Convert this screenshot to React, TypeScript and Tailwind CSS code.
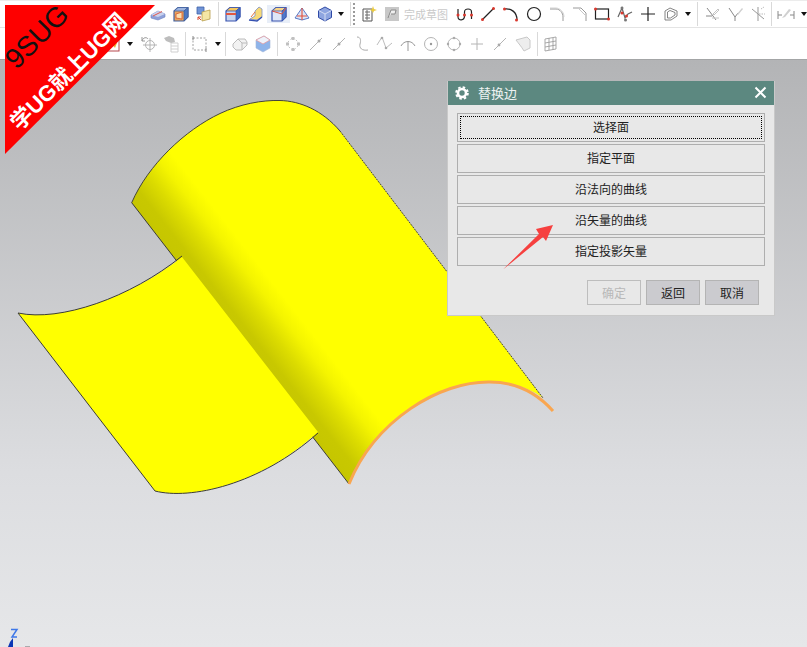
import React from 'react';

const Ico = ({ children }: { children: React.ReactNode }) => (
  <svg width="18" height="18" viewBox="0 0 18 18" fill="none">
    {children}
  </svg>
);

const Tool = ({ children, className = '' }: { children: React.ReactNode; className?: string }) => (
  <div className={`flex w-[23px] shrink-0 items-center justify-center ${className}`}>
    <Ico>{children}</Ico>
  </div>
);

const Sep = ({ className = '' }: { className?: string }) => (
  <div className={`h-[24px] w-px shrink-0 bg-[#d9d9d9] ${className}`} />
);

const Arrow = ({ className = '' }: { className?: string }) => (
  <div className={`flex w-[10px] shrink-0 justify-center ${className}`}>
    <div className="h-0 w-0 border-x-[3.5px] border-t-[4px] border-x-transparent border-t-[#111]" />
  </div>
);

const Box = ({ top, side, front, line = '#3a55b0' }: { top: string; side: string; front: string; line?: string }) => (
  <>
    <path d="M2 6 L6 2.5 H16 V12 L12 16 H2 Z" fill={front} stroke={line} strokeWidth="1.2" />
    <path d="M2 6 L6 2.5 H16 L12 6 Z" fill={top} stroke={line} strokeWidth="0.8" />
    <path d="M12 6 L16 2.5 V12 L12 16 Z" fill={side} stroke={line} strokeWidth="0.8" />
  </>
);

const Dot = ({ x, y, c = '#d9382e' }: { x: number; y: number; c?: string }) => <circle cx={x} cy={y} r="1.5" fill={c} />;

const Toolbar = () => (
  <div className="h-[60px] shrink-0 border-b border-[#a3a5a6] bg-white">
    <div className="flex h-[28px] items-center overflow-hidden border-y border-t-[#ececec] border-b-[#e4e4e4] pl-[146px]">
      <Tool>
        <path d="M2 10 L9 6 L16 9 V12 L9 15 L2 13 Z" fill="#8ea0d8" stroke="#6b7fc0" strokeWidth="0.6" />
        <path d="M2 10 L9 6 L16 9 L9 12 Z" fill="#c9d2ee" />
        <path d="M4 11 L13 6.5" stroke="#e0564b" strokeWidth="1" />
      </Tool>
      <Tool>
        <Box top="#9db4de" side="#4d78c2" front="#e9a45c" line="#41619f" />
        <path d="M4 9 L10 7 V14 L4 13 Z" fill="#fbe0b0" stroke="#d6562f" strokeWidth="0.8" />
      </Tool>
      <Tool>
        <path d="M2 2 H9 V9 H2 Z" fill="#6f93d6" stroke="#3f62a8" strokeWidth="0.8" />
        <path d="M7 7 L15 5 V14 L7 16 Z" fill="#f5e6a5" stroke="#b89d4a" strokeWidth="0.8" />
        <path d="M3 12 L6 15 M3 15 V12 H6" stroke="#d9482e" strokeWidth="1" />
      </Tool>
      <Sep className="ml-[3px]" />
      <Tool className="ml-[2px]">
        <Box top="#f4c65e" side="#3f6cc4" front="#c9d6ef" />
        <path d="M2 9 H12" stroke="#e2573f" strokeWidth="2" />
      </Tool>
      <Tool>
        <path d="M3 14 L8 11 V6 L12 2 L15 4 V12 L10 15 Z" fill="#f6d977" stroke="#7c8fc4" strokeWidth="0.8" />
        <path d="M2 15 L10 16 L15 12" stroke="#3450b0" strokeWidth="1.3" />
        <path d="M8 7 L4 12" stroke="#e2733f" strokeWidth="1" />
      </Tool>
      <Tool className="bg-[#e8eef8]">
        <Box top="#f7d488" side="#4f78c9" front="#dfe7f6" />
        <path d="M2 6 L12 9 L16 3" stroke="#e2573f" strokeWidth="1" />
      </Tool>
      <Tool>
        <path d="M9 3 L16 13 L9 15 L2 13 Z" fill="#dbe4f6" stroke="#4b6cc0" strokeWidth="0.9" />
        <path d="M9 3 V15 M4 11 H14" stroke="#e2503a" strokeWidth="1.1" />
      </Tool>
      <Tool>
        <path d="M9 2 L15.5 5.5 V12.5 L9 16 L2.5 12.5 V5.5 Z" fill="#8ea5e0" stroke="#2f4aa6" strokeWidth="1" />
        <path d="M2.5 5.5 L9 9 L15.5 5.5 M9 9 V16" stroke="#d4ddf4" strokeWidth="1" />
      </Tool>
      <Arrow />
      <Sep className="ml-[4px]" />
      <div className="ml-[2px] h-[22px] w-[4px] shrink-0 border-l-2 border-dotted border-[#9a9a9a]" />
      <Tool>
        <path d="M3 4 H12 V16 H3 Z" fill="#fff" stroke="#555" strokeWidth="1" />
        <path d="M5 7 H10 M5 10 H10 M5 13 H10 M7 5 V15" stroke="#6a6a6a" strokeWidth="1" />
        <path d="M13 1 L14 4 L17 5 L14 6 L13 8 L12 6 L10 5 L12 4 Z" fill="#e9c93f" />
      </Tool>
      <Tool>
        <rect x="2" y="2" width="14" height="14" fill="#c8c8c8" />
        <path d="M5 13 L8 5 L13 5 L12 9 L8 9" fill="#efefef" stroke="#8a8a8a" strokeWidth="1" />
      </Tool>
      <span className="ml-px w-[44px] shrink-0 font-['Noto_Sans_CJK_SC',sans-serif] text-[11px] leading-none whitespace-nowrap text-[#c9c9c9]">完成草图</span>
      <Tool className="ml-[5px]">
        <path d="M2 4 V12 C2 16 8.5 16 8.5 11 V7 C8.5 3 15.5 3 15.5 7 V14" stroke="#222" strokeWidth="1.2" />
        <Dot x={2} y={10} />
        <Dot x={8.5} y={10} />
        <Dot x={15.5} y={10} />
      </Tool>
      <Tool>
        <path d="M3 15 L15 3" stroke="#222" strokeWidth="1.2" />
        <Dot x={3.5} y={14.5} />
        <Dot x={14.5} y={3.5} />
      </Tool>
      <Tool>
        <path d="M2 4 C9 3 15 7 15 15" stroke="#222" strokeWidth="1.3" />
        <Dot x={2.5} y={4} />
        <Dot x={14.5} y={15} />
      </Tool>
      <Tool>
        <circle cx="9" cy="9" r="6.5" stroke="#222" strokeWidth="1.2" />
      </Tool>
      <Tool>
        <path d="M2 4 H8 C12 4 15 8 15 12 V16" stroke="#9a9a9a" strokeWidth="1" />
        <path d="M2 3 H8 C11 3 16 6 16 12" stroke="#c8c8c8" strokeWidth="0.8" />
      </Tool>
      <Tool>
        <path d="M2 3 H10 L15 8 V16" stroke="#9a9a9a" strokeWidth="1" />
        <path d="M8 4 L14 10" stroke="#c8c8c8" strokeWidth="1" />
      </Tool>
      <Tool className="-ml-px">
        <rect x="2.5" y="4" width="13" height="10" stroke="#222" strokeWidth="1.2" />
        <Dot x={2.5} y={4} />
        <Dot x={15.5} y={14} />
      </Tool>
      <Tool>
        <path d="M2 12 L6 3 L9 13 L12 9 L16 7" stroke="#666" strokeWidth="1.2" />
        <Dot x={6} y={8} />
        <Dot x={10.5} y={11} />
        <Dot x={6} y={3} c="#777" />
        <Dot x={9.5} y={15} c="#777" />
      </Tool>
      <Tool>
        <path d="M2 9 H16 M9 2 V16" stroke="#222" strokeWidth="1.2" />
      </Tool>
      <Tool>
        <path d="M3 6 L8 3 L15 6 V11 L9 15 H3 Z M5.5 7 L8 5.5 L13 7.5 V10 L8.5 13 H5.5 Z" stroke="#777" strokeWidth="0.9" />
      </Tool>
      <Arrow className="ml-px" />
      <Sep className="ml-[4px]" />
      <Tool className="ml-[2px]">
        <path d="M4 3 L13 15 M3 11 H9" stroke="#888" strokeWidth="1" />
        <path d="M10 9 L15 4 L16 5 L11 10 Z M9 13 H16" stroke="#c4c4c4" strokeWidth="1" />
      </Tool>
      <Tool>
        <path d="M3 3 L9 12 V16 M9 12 L12 8" stroke="#888" strokeWidth="1" />
        <path d="M11 9 L16 3 L17 4 L12 10 Z" fill="#cfcfcf" />
      </Tool>
      <Tool>
        <path d="M3 4 L15 14 M9 2 V16" stroke="#999" strokeWidth="1" />
        <path d="M10 9 H16 M12 4 L15 2" stroke="#bbb" strokeWidth="1" strokeDasharray="1.5 1" />
      </Tool>
      <Sep className="ml-[2px]" />
      <Tool className="ml-[2px]">
        <path d="M1 6 V14 M17 6 V14 M1 10 H5 M13 10 H17" stroke="#888" strokeWidth="1" />
        <path d="M5 13 L12 4 L14 5 L8 12 Z" fill="#d0d0d0" />
      </Tool>
      <Arrow className="ml-[2px]" />
    </div>
    <div className="flex h-[31px] items-center overflow-hidden pl-[100px]">
      <Tool>
        <rect x="0" y="1" width="16" height="15" fill="#fff" stroke="#b5474c" strokeWidth="1" />
        <path d="M9 9 L14 8 L12 13 Z" fill="#e8b73a" />
      </Tool>
      <Arrow className="ml-[2px]" />
      <Tool className="ml-[2px]">
        <circle cx="10" cy="10" r="4.5" stroke="#b4b4b4" strokeWidth="1" />
        <path d="M10 3 V17 M3 10 H17" stroke="#b4b4b4" strokeWidth="1" />
        <path d="M2 6 C3 2 7 2 8 4 M2 2 V6 H5" stroke="#999" strokeWidth="1" />
      </Tool>
      <Tool>
        <path d="M8 8 H15 V17 H8 Z M8 11 H15 M8 14 H15" stroke="#cfcfcf" strokeWidth="1" />
        <path d="M1 3 L6 1 L11 3 L12 7 L8 8 L3 6 Z" fill="#bdbdbd" />
      </Tool>
      <Sep className="ml-[2px]" />
      <Tool className="ml-[2px]">
        <rect x="2" y="3" width="13" height="12" stroke="#a0a0a0" strokeWidth="1" strokeDasharray="2 1.5" />
        <path d="M2 1 V5 M15 13 V17" stroke="#888" strokeWidth="1" />
      </Tool>
      <Arrow className="ml-[2px]" />
      <Sep className="ml-[2px]" />
      <Tool className="ml-[2px]">
        <path d="M2 9 L7 4 H14 L16 7 V10 L11 15 H5 L2 12 Z M7 4 L11 8 V15 M11 8 H16" fill="#f2f2f2" stroke="#bcbcbc" strokeWidth="1" />
      </Tool>
      <Tool>
        <path d="M2 5 L10 1 L16 5 V13 L9 17 L2 13 Z" fill="#8eb4ea" stroke="#a3b6d6" strokeWidth="0.6" />
        <path d="M2 5 L9 9 L16 5 L10 1 Z" fill="#eef3fb" stroke="#e39aa0" strokeWidth="0.8" />
      </Tool>
      <Sep className="ml-[3px]" />
      <Tool className="ml-[3px]">
        <path d="M9 2 L16 9 L9 16 L2 9 Z" stroke="#c4c4c4" strokeWidth="1" strokeDasharray="2 2" />
        <rect x="2" y="7.5" width="3" height="3" fill="#c0c0c0" />
        <rect x="13" y="7.5" width="3" height="3" fill="#c0c0c0" />
        <rect x="7.5" y="2" width="3" height="3" fill="#c0c0c0" />
        <rect x="7.5" y="13" width="3" height="3" fill="#c0c0c0" />
      </Tool>
      <Tool>
        <path d="M3 15 L15 3" stroke="#b4b4b4" strokeWidth="1" />
        <circle cx="12" cy="6" r="1.5" fill="#a8a8a8" />
      </Tool>
      <Tool>
        <path d="M3 15 L15 3" stroke="#b4b4b4" strokeWidth="1" />
        <circle cx="9" cy="9" r="1.5" fill="#a8a8a8" />
      </Tool>
      <Tool>
        <path d="M4 2 C8 2 8 6 7 9 C6 13 9 16 15 15" stroke="#aaa" strokeWidth="1" />
      </Tool>
      <Tool>
        <path d="M1 10 L6 2 L10 13 L16 8" stroke="#bdbdbd" strokeWidth="1" />
        <circle cx="6" cy="3" r="1.3" fill="#aaa" />
        <circle cx="10" cy="13" r="1.3" fill="#aaa" />
      </Tool>
      <Tool>
        <path d="M2 11 C5 5 13 5 16 11 M9 6 V16" stroke="#999" strokeWidth="1" />
      </Tool>
      <Tool>
        <circle cx="9" cy="9" r="6.5" stroke="#b4b4b4" strokeWidth="1" />
        <circle cx="9" cy="9" r="1.2" fill="#999" />
      </Tool>
      <Tool>
        <circle cx="9" cy="9" r="6" stroke="#b4b4b4" strokeWidth="1" />
        <circle cx="9" cy="3" r="1.2" fill="#aaa" />
        <circle cx="3" cy="9" r="1.2" fill="#aaa" />
        <circle cx="15" cy="9" r="1.2" fill="#aaa" />
        <circle cx="9" cy="15" r="1.2" fill="#aaa" />
      </Tool>
      <Tool>
        <path d="M3 9 H15 M9 3 V15" stroke="#b4b4b4" strokeWidth="1" />
      </Tool>
      <Tool>
        <path d="M3 15 L15 3" stroke="#b4b4b4" strokeWidth="1" />
        <circle cx="8" cy="10" r="1.4" fill="#a8a8a8" />
      </Tool>
      <Tool>
        <path d="M2 5 L13 2 L16 5 V13 L10 16 C7 11 5 9 2 5 Z" fill="#ededed" stroke="#c8c8c8" strokeWidth="1" />
      </Tool>
      <Sep className="ml-[3px]" />
      <Tool className="ml-px">
        <path d="M3 4 L14 2 V14 L3 16 Z M3 8 L14 6 M3 12 L14 10 M7 3 V15 M11 3 V15" stroke="#9f9f9f" strokeWidth="0.9" />
      </Tool>
    </div>
  </div>
);

const topArc = 'M131.7 202.7 C148 165 185 130 220 113.5 C240 104 262 100 280 100.5 C300 101 322 110 340 131';

const Model = () => (
  <svg className="absolute inset-0" width="807" height="587" viewBox="0 60 807 587" fill="none">
    <defs>
      <linearGradient id="bend" gradientUnits="userSpaceOnUse" x1="240" y1="343" x2="295" y2="300">
        <stop offset="0" stopColor="#c6c600" />
        <stop offset="0.2" stopColor="#c8c800" />
        <stop offset="0.45" stopColor="#dcdc00" />
        <stop offset="0.7" stopColor="#f4f400" />
        <stop offset="0.9" stopColor="#ffff00" />
      </linearGradient>
    </defs>
    <path d={`${topArc} L543 398 C530 388 510 382 490 382 C440 381 375 420 349 484 Z`} fill="url(#bend)" />
    <path d={topArc} stroke="#45453a" strokeWidth="1" />
    <path d="M340 131 L543 398" stroke="#45453a" strokeWidth="1" strokeDasharray="2 1" />
    <path d="M131.7 202.7 L349 484" stroke="#3c3c38" strokeWidth="1" />
    <path d="M18 313 C60 322 130 298 182 257 L318 432 C260 485 190 500 155 491 Z" fill="#ffff00" />
    <path d="M318 433 C260 485 190 500 155 491 L18 313 C60 322 130 298 182 256" stroke="#3c3c38" strokeWidth="1" />
    <path d="M349 484 C375 420 440 381 490 382 C515 382 537 393 553 411" stroke="#f9a650" strokeWidth="3" />
    <path d="M11 629.5 H17 L12 637 H17" stroke="#3f78e8" strokeWidth="1.5" />
    <path d="M8 647 L10 642 L13 638 L13 647 Z" fill="#0b37b5" />
    <path d="M25 646.5 H30" stroke="#a9abad" strokeWidth="1" />
  </svg>
);

const DlgBtn = ({ label, focus = false }: { label: string; focus?: boolean }) => (
  <button className="relative flex h-[29px] w-full items-center justify-center border border-[#aeaeae] bg-[#e8e8e8] pb-[2px] text-[12px] text-[#222]">
    {focus && <span className="absolute inset-[2px] border border-dotted border-black" />}
    {label}
  </button>
);

const Dialog = () => (
  <div className="absolute top-[21px] left-[447px] w-[328px] border border-t-0 border-[#c9c9c9] bg-[#e8e8e8] font-['Noto_Sans_CJK_SC',sans-serif]">
    <div className="flex h-[24px] items-center bg-[#5c8880] px-[7px] pb-[1px] text-white">
      <svg width="14" height="14" viewBox="0 0 14 14" fill="none">
        <circle cx="7" cy="7" r="4" stroke="#fff" strokeWidth="2.6" />
        <circle cx="7" cy="7" r="5.8" stroke="#fff" strokeWidth="2" strokeDasharray="2.5 2.05" />
      </svg>
      <span className="ml-[9px] text-[13px] leading-none text-[#eef3f2]">替换边</span>
      <svg className="ml-auto" width="13" height="13" viewBox="0 0 13 13" fill="none">
        <path d="M1.5 1.5 L11.5 11.5 M11.5 1.5 L1.5 11.5" stroke="#fff" strokeWidth="2" />
      </svg>
    </div>
    <div className="flex flex-col gap-[2px] px-[9px] pt-[8px]">
      <DlgBtn label="选择面" focus />
      <DlgBtn label="指定平面" />
      <DlgBtn label="沿法向的曲线" />
      <DlgBtn label="沿矢量的曲线" />
      <DlgBtn label="指定投影矢量" />
    </div>
    <div className="flex justify-end gap-[5px] pt-[14px] pr-[15px] pb-[10px] text-[12px]">
      <button className="h-[25px] w-[54px] border border-[#bdbdbd] bg-[#e8e8e8] text-[#b8b8b8]">确定</button>
      <button className="h-[25px] w-[54px] border border-[#b4b4b4] bg-[#cbcbcf] text-[#222]">返回</button>
      <button className="h-[25px] w-[54px] border border-[#b4b4b4] bg-[#cbcbcf] text-[#222]">取消</button>
    </div>
    {/* red pointer pasted over the screenshot */}
    <svg className="absolute top-[144px] left-[54px]" width="52" height="46" viewBox="502 225 52 46">
      <path d="M553 225 L546 241 L543 237 L503 269.5 L539 234 L536 229 Z" fill="#f6403f" />
    </svg>
  </div>
);

const Ribbon = () => (
  <div className="absolute top-[5px] left-[5px] h-[149px] w-[150px] bg-[#fe0000] [clip-path:polygon(0_0,100%_0,0_100%)]">
    <span className="absolute top-[32px] left-[32px] -translate-x-1/2 -translate-y-1/2 -rotate-45 font-['Liberation_Sans',sans-serif] text-[28px] leading-none whitespace-nowrap text-[#111]">
      9SUG
    </span>
    <span className="absolute top-[67px] left-[64px] -translate-x-1/2 -translate-y-1/2 -rotate-45 font-['Liberation_Sans','Noto_Sans_CJK_SC',sans-serif] text-[22px] leading-none font-bold whitespace-nowrap text-white">
      学UG就上UG网
    </span>
  </div>
);

export default function App() {
  return (
    <div className="relative flex h-[647px] w-[807px] flex-col overflow-hidden">
      <Toolbar />
      <div className="relative flex-1 bg-linear-to-b from-[#b3b4b6] via-[#dcdde0] via-70% to-[#e6e7e9]">
        <Model />
        <Dialog />
      </div>
      <Ribbon />
    </div>
  );
}
